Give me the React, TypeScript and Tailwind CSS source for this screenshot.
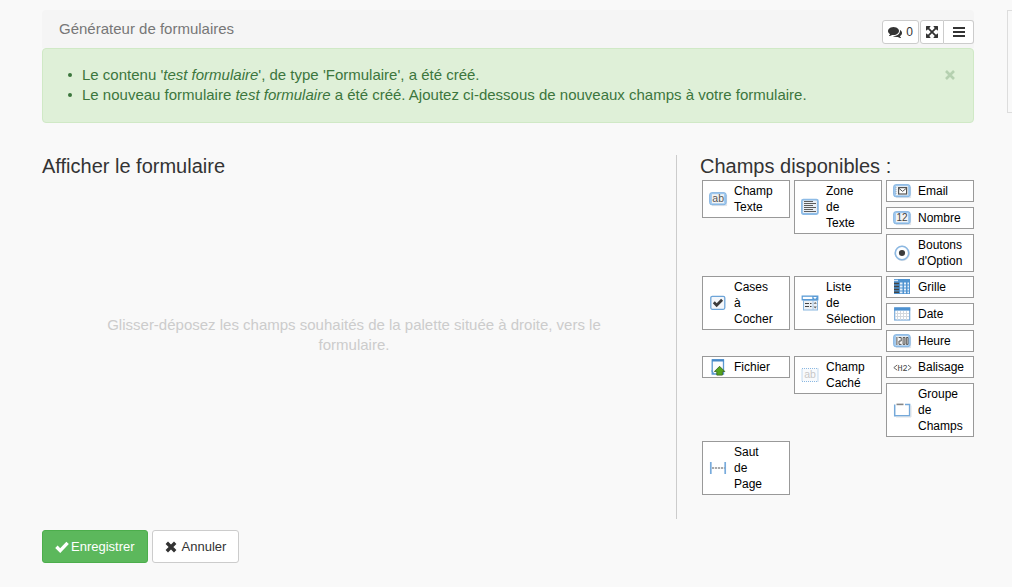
import type { ReactNode } from "react";

function CommentsIcon() {
  return (
    <svg viewBox="0 0 1792 1792" className="size-3.5" fill="currentColor" aria-hidden="true">
      <path d="M1408 768q0 139-94 257t-256.5 186.5-353.5 68.5q-86 0-176-16-124 88-278 128-36 9-86 16h-3q-11 0-20.5-8t-11.5-21q-1-3-1-6.5t.5-6.5 2-6l2.5-5 3.5-5.5 4-5 4.5-5 4-4.5q5-6 23-25t26-29.5 22.5-29 25-38.5 20.5-44q-124-72-195-177t-71-224q0-139 94-257t256.5-186.5 353.5-68.5 353.5 68.5 256.5 186.5 94 257zm384 256q0 120-71 224.5t-195 176.5q10 24 20.5 44t25 38.5 22.5 29 26 29.5 23 25q1 1 4 4.5t4.5 5 4 5 3.5 5.5l2.5 5 2 6 .5 6.5-1 6.5q-3 14-13 22t-22 7q-50-7-86-16-154-40-278-128-90 16-176 16-271 0-472-132 58 4 88 4 161 0 309-45t264-129q125-92 192-212t67-254q0-77-23-152 129 71 204 178t75 230z" />
    </svg>
  );
}

function ExpandIcon() {
  return (
    <svg viewBox="0 0 1792 1792" className="size-3.5" fill="currentColor" aria-hidden="true">
      <path d="M1411 541l-355 355 355 355 144-144q29-31 70-14 39 17 39 59v448q0 26-19 45t-45 19h-448q-42 0-59-40-17-39 14-69l144-144-355-355-355 355 144 144q31 30 14 69-17 40-59 40h-448q-26 0-45-19t-19-45v-448q0-42 40-59 39-17 69 14l144 144 355-355-355-355-144 144q-19 19-45 19-12 0-24-5-40-17-40-59v-448q0-26 19-45t45-19h448q42 0 59 40 17 39-14 69l-144 144 355 355 355-355-144-144q-31-30-14-69 17-40 59-40h448q26 0 45 19t19 45v448q0 42-39 59-13 5-25 5-26 0-45-19z" />
    </svg>
  );
}

function BarsIcon() {
  return (
    <svg viewBox="0 0 12 10" className="h-2.5 w-3" fill="currentColor" aria-hidden="true">
      <path d="M0 0h12v2H0zM0 4h12v2H0zM0 8h12v2H0z" />
    </svg>
  );
}

function CheckIcon() {
  return (
    <svg viewBox="0 0 14 12" className="h-3 w-3.5" aria-hidden="true">
      <path d="M1.4 5.8l3.8 3.8 7.4-7.8" fill="none" stroke="currentColor" strokeWidth="3.4" />
    </svg>
  );
}

function CrossIcon() {
  return (
    <svg viewBox="0 0 12 12" className="size-3" aria-hidden="true">
      <path d="M1.8 1.8l8.4 8.4M10.2 1.8l-8.4 8.4" stroke="currentColor" strokeWidth="3.4" />
    </svg>
  );
}

function CloseIcon() {
  return (
    <svg viewBox="0 0 12 12" className="size-3" aria-hidden="true">
      <path d="M2 2l8 8M10 2l-8 8" stroke="currentColor" strokeWidth="2.6" />
    </svg>
  );
}

function InputFrame({ children }: { children?: ReactNode }) {
  return (
    <>
      <path d="M3 15.6h14.6V5" fill="none" stroke="#d5dbe2" strokeWidth="0.8" />
      <rect x="0.7" y="2.7" width="16.4" height="12" rx="2" fill="#a5ccf0" stroke="#7fb1df" strokeWidth="1" />
      <rect x="3" y="4.2" width="12" height="9" fill="#f3f3f3" />
      {children}
    </>
  );
}

const textField = (
  <InputFrame>
    <text x="9.2" y="12.4" fontSize="10.5" textAnchor="middle" fill="#555">ab</text>
  </InputFrame>
);

const textArea = (
  <>
    <rect x="0.9" y="1.6" width="16" height="14.4" rx="1.5" fill="#e9eef4" stroke="#8dbbe6" strokeWidth="1.8" />
    <path d="M3 3.5h9M3 5.5h12M3 7.5h9M3 9.5h12M3 11.5h9M3 13.5h12" stroke="#5c5c5c" strokeWidth="1" />
  </>
);

const email = (
  <InputFrame>
    <rect x="5.6" y="5.6" width="8" height="6.4" fill="#fff" stroke="#555" strokeWidth="1.2" />
    <path d="M6 6.4l3.6 3 3.6-3" fill="none" stroke="#555" strokeWidth="1" />
    <path d="M3 5v8" stroke="#8f979f" strokeWidth="0.7" strokeDasharray="1 1" />
  </InputFrame>
);

const number = (
  <InputFrame>
    <text x="9" y="12.3" fontSize="10" textAnchor="middle" fill="#444">12</text>
  </InputFrame>
);

const radio = (
  <>
    <circle cx="9.2" cy="9.4" r="7.2" fill="none" stroke="#d9dfe5" strokeWidth="1" />
    <circle cx="9" cy="9" r="6.7" fill="#fff" stroke="#8cb8e2" strokeWidth="1.6" />
    <circle cx="9" cy="9" r="3.1" fill="#3b3b3b" />
  </>
);

const checkbox = (
  <>
    <rect x="1.8" y="2.3" width="14" height="13" rx="1.5" fill="#f4f7fb" stroke="#6da4d8" strokeWidth="1.3" />
    <path d="M4.8 8.2l2.9 3 5.4-5.4" fill="none" stroke="#3c3c3c" strokeWidth="2.8" />
  </>
);

const select = (
  <>
    <rect x="0.6" y="1.5" width="16.8" height="5" fill="#5b9cd6" />
    <rect x="1.8" y="2.8" width="9.5" height="2.2" fill="#fff" />
    <path d="M12.2 3l1.8 2.2L15.8 3z" fill="#fff" />
    <rect x="2.5" y="6.5" width="14" height="9.5" fill="#edf1f5" stroke="#8ab7e0" strokeWidth="1" />
    <path d="M4 9.5h4M4 12.5h4M9 9.5h1.5M9 12.5h1.5" stroke="#444" strokeWidth="1.2" />
    <path d="M12 7v9" stroke="#a9c9e8" strokeWidth="1" />
    <path d="M12.5 9.8l1.7-1.9 1.7 1.9zM12.5 12.5l1.7 1.9 1.7-1.9z" fill="#666" />
  </>
);

const grid = (
  <>
    <rect x="1" y="1" width="16" height="15" fill="#4f93d0" />
    <path d="M7 5.5h2.5M11 5.5h2M14.5 5.5H16M7 8.5h2.5M11 8.5h2M14.5 8.5H16M7 11.5h2.5M11 11.5h2M14.5 11.5H16M7 14.3h2.5M11 14.3h2M14.5 14.3H16" stroke="#e6f0fa" strokeWidth="1.8" />
    <path d="M1 5.5h5M1 8.5h5M1 11.5h5M1 14.3h5" stroke="#454545" strokeWidth="1.5" />
    <path d="M1 2.5h4" stroke="#cfe2f4" strokeWidth="1.4" />
  </>
);

const calendar = (
  <>
    <rect x="1.7" y="3" width="15" height="12" fill="#fff" stroke="#79aada" strokeWidth="1.2" />
    <rect x="1.2" y="2.4" width="16" height="3.2" fill="#4d91d0" />
    <path d="M4.5 6v9M7.5 6v9M10.5 6v9M13.5 6v9M2 8.5h14M2 11.5h14" stroke="#d3d8de" strokeWidth="1" />
  </>
);

const clock = (
  <InputFrame>
    <path d="M3.9 5v8M5.6 5.5h2.6V9H6v3.4h2.5M10.1 5.5h1.8v6.9h-1.8zM13.3 5.5h1.7v6.9h-1.7z" fill="none" stroke="#555" strokeWidth="1" />
  </InputFrame>
);

const upload = (
  <>
    <path d="M3.2 1.8h11.3V16H3.2z" fill="#fbfcfe" stroke="#5b98d0" strokeWidth="1.3" />
    <path d="M3 2.4h12" stroke="#4589c9" strokeWidth="2.2" />
    <path d="M2.6 12.5l2.2 3.3" stroke="#5b98d0" strokeWidth="1.2" />
    <path d="M10.6 8.3l5.2 5.2h-2.4v3.6H7.8v-3.6H5.4z" fill="#55a51c" stroke="#3d6b24" strokeWidth="0.9" />
  </>
);

const hidden = (
  <>
    <rect x="1" y="2.5" width="16" height="13" fill="#f8fafc" stroke="#8bb8e2" strokeWidth="1" strokeDasharray="1 1" />
    <text x="9" y="12.4" fontSize="10.5" textAnchor="middle" fill="#c8c8c8">ab</text>
  </>
);

const markup = (
  <>
    <path d="M4.2 7L0.8 9.6l3.4 2.6M15 7l3.2 2.6L15 12.2" fill="none" stroke="#666" strokeWidth="1" />
    <text x="9.6" y="12.6" fontSize="8.5" textAnchor="middle" fill="#444" className="font-['Liberation_Mono',monospace]">H2</text>
  </>
);

const group = (
  <>
    <path d="M12 3.5h4.6v11.3H1.7V3.5" fill="#fff" stroke="#75a9da" strokeWidth="1.5" />
    <path d="M3.5 3.4h7" stroke="#858585" strokeWidth="1.6" />
    <path d="M3 16h15V4.5" fill="none" stroke="#d6dbe0" strokeWidth="0.8" />
  </>
);

const pageBreak = (
  <>
    <path d="M1.8 3v12M16.2 3v12" stroke="#78abdc" strokeWidth="1.7" />
    <path d="M3 9h12.5" stroke="#555" strokeWidth="1.2" strokeDasharray="2.2 0.8" />
  </>
);

type Field = { label: string; icon: ReactNode };

/* Each row of the palette holds three stacks of fields. */
const palette: Field[][][] = [
  [
    [{ label: "Champ Texte", icon: textField }],
    [{ label: "Zone de Texte", icon: textArea }],
    [
      { label: "Email", icon: email },
      { label: "Nombre", icon: number },
      { label: "Boutons d'Option", icon: radio },
    ],
  ],
  [
    [{ label: "Cases à Cocher", icon: checkbox }],
    [{ label: "Liste de Sélection", icon: select }],
    [
      { label: "Grille", icon: grid },
      { label: "Date", icon: calendar },
      { label: "Heure", icon: clock },
    ],
  ],
  [
    [{ label: "Fichier", icon: upload }],
    [{ label: "Champ Caché", icon: hidden }],
    [
      { label: "Balisage", icon: markup },
      { label: "Groupe de Champs", icon: group },
    ],
  ],
  [[{ label: "Saut de Page", icon: pageBreak }]],
];

function FieldButton({ label, icon }: Field) {
  return (
    <button
      type="button"
      draggable
      className="flex w-full cursor-move items-center gap-[7px] border border-[#999] bg-white py-0.5 pl-1.5 text-left text-xs leading-4 text-black"
    >
      <svg viewBox="0 0 18 18" className="-my-px size-[18px] shrink-0 overflow-visible" aria-hidden="true">
        {icon}
      </svg>
      <span className="whitespace-pre-line">{label.split(" ").join("\n")}</span>
    </button>
  );
}

export default function App() {
  return (
    <div className="flex min-h-screen items-start gap-[33px] overflow-hidden bg-[#f9f9f9] pt-2.5 pl-[42px] font-['Liberation_Sans',Arial,sans-serif] text-[15px] leading-5 text-[#333]">
      <main className="min-w-0 flex-1">
        <header className="flex h-[38px] items-start justify-between rounded-t bg-[#f5f5f5] pl-[17px] text-[#777]">
          <h1 className="pt-[9px]">Générateur de formulaires</h1>
          <div className="flex gap-px pt-2.5 text-xs text-[#333]">
            <button type="button" aria-label="Commentaires : 0" className="flex h-6 items-center gap-1 rounded-[3px] border border-[#ccc] bg-white px-[5px]">
              <CommentsIcon />
              <span>0</span>
            </button>
            <div className="flex">
              <button type="button" aria-label="Plein écran" className="flex h-6 w-6 items-center justify-center rounded-l-[3px] border border-[#ccc] bg-white">
                <ExpandIcon />
              </button>
              <button type="button" aria-label="Menu" className="flex h-6 w-[30px] items-center justify-center rounded-r-[3px] border border-l-0 border-[#ccc] bg-white">
                <BarsIcon />
              </button>
            </div>
          </div>
        </header>

        <div role="alert" className="flex items-start justify-between rounded border border-[#d0e9c6] bg-[#dff0d8] pt-4 pr-[17px] pb-[17px] pl-[39px] text-[#3c763d]">
          <ul className="list-none">
            {[
              <>Le contenu '<em>test formulaire</em>', de type 'Formulaire', a été créé.</>,
              <>Le nouveau formulaire <em>test formulaire</em> a été créé. Ajoutez ci-dessous de nouveaux champs à votre formulaire.</>,
            ].map((message, i) => (
              <li key={i} className="flex items-center">
                <span className="-ml-3.5 mr-2.5 size-1 shrink-0 rounded-full bg-[#3c763d]" aria-hidden="true" />
                <span>{message}</span>
              </li>
            ))}
          </ul>
          <button type="button" aria-label="Fermer" className="flex h-5 items-center text-[#b5d0b0]">
            <CloseIcon />
          </button>
        </div>

        <div className="mt-8 flex">
          <section className="flex min-h-[364px] flex-1 flex-col border-r border-[#ccc] pr-2.5">
            <h2 className="text-xl leading-[22px]">Afficher le formulaire</h2>
            <p className="mt-[138px] px-[50px] text-center text-[#ccc]">
              Glisser-déposez les champs souhaités de la palette située à droite, vers le formulaire.
            </p>
          </section>
          <section className="w-[297px] shrink-0 pl-[23px]">
            <h2 className="text-xl leading-[22px]">Champs disponibles :</h2>
            <div className="mt-[3px] flex flex-col gap-1 pl-0.5">
              {palette.map((row, r) => (
                <div key={r} className="grid grid-cols-3 items-start gap-1">
                  {row.map((stack, s) => (
                    <div key={s} className="flex flex-col gap-[5px]">
                      {stack.map((field) => (
                        <FieldButton key={field.label} {...field} />
                      ))}
                    </div>
                  ))}
                </div>
              ))}
            </div>
          </section>
        </div>

        <div className="mt-[11px] flex gap-1 text-[13px] leading-5">
          <button type="submit" className="flex h-[33px] items-center gap-0.5 rounded-[3px] border border-[#4cae4c] bg-[#5cb85c] px-3 text-white">
            <CheckIcon />
            Enregistrer
          </button>
          <button type="button" className="flex h-[33px] items-center gap-[5px] rounded-[3px] border border-[#ccc] bg-white px-3">
            <CrossIcon />
            Annuler
          </button>
        </div>
      </main>

      <aside className="h-[103px] w-[5px] shrink-0 border border-r-0 border-[#ddd]" />
    </div>
  );
}
